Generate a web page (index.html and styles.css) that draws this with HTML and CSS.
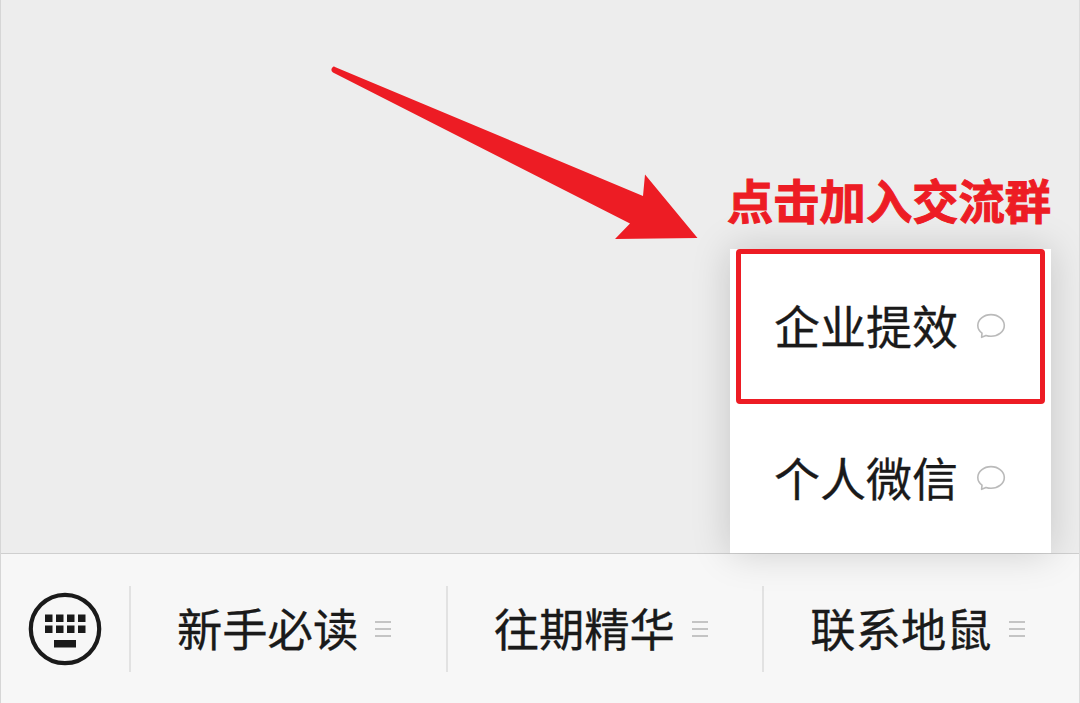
FILE: index.html
```html
<!DOCTYPE html>
<html lang="zh-CN">
<head>
  <meta charset="utf-8">
  <title>公众号菜单</title>
  <link rel="stylesheet" href="styles.css">
</head>
<body>
  <div class="screen">
    <main class="chat"></main>

    <nav class="bar">
      <div class="keyboard">
        <svg width="74" height="74" viewBox="0 0 74 74">
          <circle cx="37" cy="37" r="34.2" fill="none" stroke="#1a1a1a" stroke-width="4.2"/>
          <g fill="#1a1a1a">
            <path d="M17 22.5h7.5v7.5H17zM28 22.5h7.5v7.5H28zM39 22.5h7.5v7.5H39zM50 22.5h7.5v7.5H50z"/>
            <path d="M17 33.5h7.5V41H17zM28 33.5h7.5V41H28zM39 33.5h7.5V41H39zM50 33.5h7.5V41H50z"/>
            <path d="M26 48h22v7.5H26z"/>
          </g>
        </svg>
      </div>
      <div class="tab">
        <span>新手必读</span>
        <i class="lines"></i>
      </div>
      <div class="tab">
        <span>往期精华</span>
        <i class="lines"></i>
      </div>
      <div class="tab">
        <span>联系地鼠</span>
        <i class="lines"></i>
      </div>
    </nav>

    <div class="menu">
      <div class="item">
        <span>企业提效</span>
        <svg class="bubble" width="30" height="28" viewBox="0 0 30 28">
          <path d="M6 22.200C3.300 20.200 1.800 17.500 1.800 14.500C1.800 8.400 7.700 3.600 15 3.600S28.300 8.400 28.300 14.500S22.300 25.200 15 25.200C13.200 25.200 11.500 24.900 10 24.400L5.600 26.300Z"/>
        </svg>
      </div>
      <div class="item">
        <span>个人微信</span>
        <svg class="bubble" width="30" height="28" viewBox="0 0 30 28">
          <path d="M6 22.200C3.300 20.200 1.800 17.500 1.800 14.500C1.800 8.400 7.700 3.600 15 3.600S28.300 8.400 28.300 14.500S22.300 25.200 15 25.200C13.200 25.200 11.500 24.900 10 24.400L5.600 26.300Z"/>
        </svg>
      </div>
      <div class="frame"></div>
    </div>

    <div class="tip">点击加入交流群</div>
    <svg class="arrow" width="380" height="180" viewBox="0 0 380 180">
      <path d="M4.500 6.500Q0.500 9.500 4 12.500L301 163.500L286 179L368.500 178L316 114.500L314 136L6.500 7.200Q5.500 6.300 4.500 6.500Z"/>
    </svg>
  </div>
</body>
</html>
```

FILE: styles.css
```css
* {
  box-sizing: border-box;
}

body {
  margin: 0;
  font-family: "Noto Sans CJK SC", sans-serif;
  color: #1a1a1a;
}

.screen {
  position: relative;
  display: flex;
  flex-direction: column;
  width: 1080px;
  height: 703px;
  overflow: hidden;
  background: #ededed;
  border-left: 1px solid #d6d6d6;
  border-right: 1px solid #dcdcdc;
}

.chat {
  flex: 1;
}

.bar {
  display: flex;
  align-items: center;
  height: 150px;
  background: #f7f7f7;
  border-top: 1px solid #cfcfcf;
}

.keyboard {
  display: flex;
  justify-content: center;
  width: 128px;
}

.tab {
  flex: 1;
  display: flex;
  align-items: center;
  height: 86px;
  padding-left: 46px;
  border-left: 2px solid #e2e2e2;
  font-size: 45.3px;
  line-height: 82px;
  -webkit-text-stroke: 0.3px #1a1a1a;
}

.tab span {
  padding-bottom: 4px;
}

.lines {
  width: 16px;
  height: 16px;
  margin-left: 17px;
  border-top: 2px solid #c4c4c4;
  border-bottom: 2px solid #c4c4c4;
  background: linear-gradient(#c4c4c4, #c4c4c4) center / 100% 2px no-repeat;
}

.menu {
  position: absolute;
  right: 28px;
  bottom: 150px;
  width: 321px;
  background: #fff;
  box-shadow: 0 0 36px rgba(0, 0, 0, 0.17);
}

.item {
  display: flex;
  align-items: center;
  height: 152px;
  padding-left: 44px;
  font-size: 46px;
  line-height: 60px;
  -webkit-text-stroke: 0.3px #1a1a1a;
}

.item span {
  padding-bottom: 2px;
}

.bubble {
  margin-left: 18px;
  fill: none;
  stroke: #bababa;
  stroke-width: 1.6;
  stroke-linejoin: round;
}

.frame {
  position: absolute;
  top: 0;
  left: 6px;
  width: 309px;
  height: 155px;
  border: 5px solid #ed1c24;
  border-radius: 4px;
}

.tip {
  position: absolute;
  top: 165px;
  left: 726px;
  font-size: 46.3px;
  font-weight: 700;
  line-height: 68px;
  color: #ed1c24;
  -webkit-text-stroke: 1px #ed1c24;
  white-space: nowrap;
}

.arrow {
  position: absolute;
  top: 60px;
  left: 328px;
  fill: #ed1c24;
}
```
